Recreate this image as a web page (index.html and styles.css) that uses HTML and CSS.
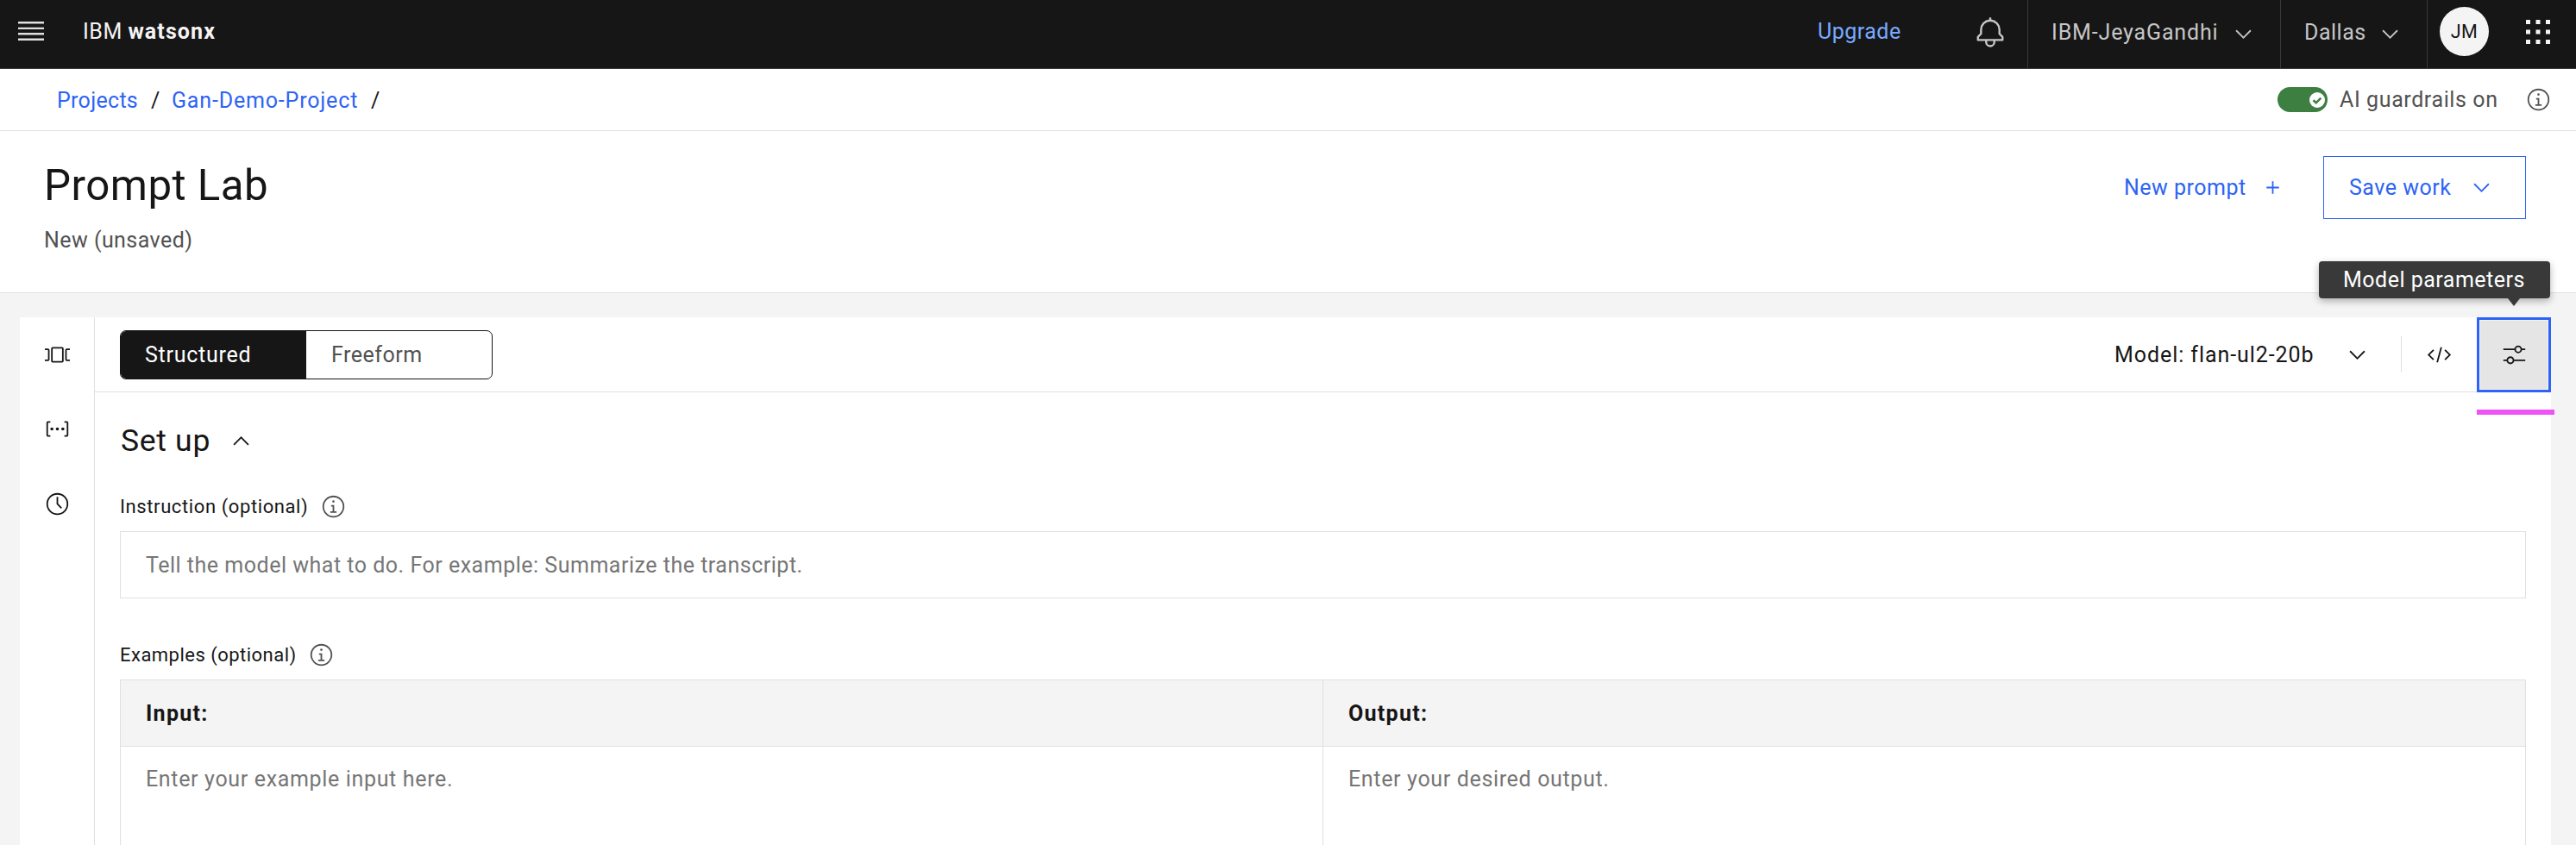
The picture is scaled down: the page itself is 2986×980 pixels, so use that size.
FILE: index.html
```html
<!DOCTYPE html>
<html lang="en">
<head>
<meta charset="utf-8">
<title>Prompt Lab</title>
<link rel="stylesheet" href="styles.css">
</head>
<body>
<svg class="sprite" aria-hidden="true">
  <symbol id="chevron" viewBox="0 0 16 16"><path d="M8 11 3 6l.7-.7L8 9.6l4.3-4.3.7.7z"/></symbol>
  <symbol id="info" viewBox="0 0 32 32"><path d="M17 22v-8h-4v2h2v6h-3v2h8v-2zM16 8a1.5 1.5 0 1 0 1.5 1.5A1.5 1.5 0 0 0 16 8Z"/><path d="M16 30A14 14 0 1 1 30 16 14 14 0 0 1 16 30ZM16 4A12 12 0 1 0 28 16 12 12 0 0 0 16 4Z"/></symbol>
</svg>

<header class="topbar">
  <svg class="menu" viewBox="0 0 30 23"><path d="M0 0h30v2.4H0zM0 6.7h30v2.4H0zM0 13.1h30v2.4H0zM0 19.6h30V22H0z"/></svg>
  <div class="brand">IBM <b>watsonx</b></div>
  <a class="upgrade">Upgrade</a>
  <svg class="bell" viewBox="0 0 32 32"><path d="M28.7071,19.293,26,16.5859V13a10.0136,10.0136,0,0,0-9-9.9492V1H15V3.0508A10.0136,10.0136,0,0,0,6,13v3.5859L3.2929,19.293A1,1,0,0,0,3,20v3a1,1,0,0,0,1,1h7v.7768a5.152,5.152,0,0,0,4.5,5.1987A5.0057,5.0057,0,0,0,21,25V24h7a1,1,0,0,0,1-1V20A1,1,0,0,0,28.7071,19.293ZM19,25a3,3,0,0,1-6,0V24h6Zm8-3H5V20.4141L7.707,17.707A1,1,0,0,0,8,17V13a8,8,0,0,1,16,0v4a1,1,0,0,0,.293.707L27,20.4141Z"/></svg>
  <div class="picker account"><span>IBM-JeyaGandhi</span><svg class="icon"><use href="#chevron"/></svg></div>
  <div class="picker region"><span>Dallas</span><svg class="icon"><use href="#chevron"/></svg></div>
  <div class="profile">
    <div class="avatar">JM</div>
    <svg class="apps" viewBox="0 0 28 28"><path d="M0 0h5v5H0zM11.500 0h5v5h-5zM23 0h5v5h-5zM0 11.500h5v5H0zM11.500 11.500h5v5h-5zM23 11.500h5v5h-5zM0 23h5v5H0zM11.500 23h5v5h-5zM23 23h5v5h-5z"/></svg>
  </div>
</header>

<nav class="crumbs">
  <a class="crumb-projects">Projects</a><span class="slash">/</span><a class="crumb-name">Gan-Demo-Project</a><span class="slash">/</span>
  <div class="guardrails">
    <div class="toggle"><div class="knob"><svg viewBox="0 0 18 18"><path d="M4.500 9.200l3.200 3.100 5.600-5.600" fill="none" stroke="#3d7f41" stroke-width="2.600"/></svg></div></div>
    <span class="guard-label">AI guardrails on</span>
    <svg class="icon"><use href="#info"/></svg>
  </div>
</nav>

<section class="page-head">
  <div class="titles">
    <h1>Prompt Lab</h1>
    <p>New (unsaved)</p>
  </div>
  <div class="actions">
    <a class="new-prompt"><span>New prompt</span><svg class="icon" viewBox="0 0 32 32"><path d="M17 15V8h-2v7H8v2h7v7h2v-7h7v-2z"/></svg></a>
    <button class="save"><span>Save work</span><svg class="icon"><use href="#chevron"/></svg></button>
  </div>
</section>

<main class="workspace">
  <aside class="rail">
    <div class="rail-item"><svg class="icon" viewBox="0 0 32 32"><path d="M22,26H10a2,2,0,0,1-2-2V8a2,2,0,0,1,2-2H22a2,2,0,0,1,2,2V24A2,2,0,0,1,22,26ZM10,8V24H22V8Z M4,24H0V22H4V10H0V8H4a2,2,0,0,1,2,2V22A2,2,0,0,1,4,24Z M32,24H28a2,2,0,0,1-2-2V10a2,2,0,0,1,2-2h4v2H28V22h4Z"/></svg></div>
    <div class="rail-item"><svg class="icon" viewBox="0 0 32 32"><path d="M7 26H4a2 2 0 0 1-2-2V8a2 2 0 0 1 2-2h3v2H4v16h3zM25 26h3a2 2 0 0 0 2-2V8a2 2 0 0 0-2-2h-3v2h3v16h-3z"/><circle cx="9" cy="16" r="2"/><circle cx="16" cy="16" r="2"/><circle cx="23" cy="16" r="2"/></svg></div>
    <div class="rail-item"><svg class="icon" viewBox="0 0 32 32"><path d="M16 30A14 14 0 1 1 30 16 14 14 0 0 1 16 30ZM16 4A12 12 0 1 0 28 16 12 12 0 0 0 16 4Z"/><path d="M20.590 22 15 16.410V7h2v8.580l5 5.010z"/></svg></div>
  </aside>

  <div class="editor">
    <div class="toolbar">
      <div class="switcher"><div class="tab active">Structured</div><div class="tab">Freeform</div></div>
      <div class="model"><span>Model: flan-ul2-20b</span><svg class="icon"><use href="#chevron"/></svg></div>
      <div class="divider"></div>
      <div class="tool"><svg class="icon" viewBox="0 0 32 32"><path d="M31 16 24 23 22.590 21.590 28.170 16 22.590 10.410 24 9zM1 16 8 9 9.410 10.410 3.830 16 9.410 21.590 8 23zM12.419 25.484 17.639 6.001 19.571 6.519 14.351 26.002z"/></svg></div>
      <div class="tool params">
        <svg class="icon" viewBox="0 0 32 32"><path d="M30,8h-4.1c-0.5-2.3-2.5-4-4.9-4s-4.4,1.700-4.9,4H2v2h14.100c0.500,2.300,2.500,4,4.900,4s4.400-1.700,4.900-4H30V8z M21,12c-1.700,0-3-1.300-3-3s1.300-3,3-3s3,1.300,3,3S22.700,12,21,12z M2,24h4.100c0.500,2.300,2.500,4,4.900,4s4.400-1.700,4.900-4H30v-2H15.900c-0.500-2.300-2.500-4-4.900-4s-4.400,1.700-4.900,4H2V24z M11,20c1.700,0,3,1.300,3,3s-1.300,3-3,3s-3-1.300-3-3S9.300,20,11,20z"/></svg>
        <div class="tooltip">Model parameters</div>
        <div class="marker"></div>
      </div>
    </div>

    <div class="content">
      <h2><span>Set up</span><svg class="icon up"><use href="#chevron"/></svg></h2>
      <div class="label instruction"><span>Instruction (optional)</span><svg class="icon"><use href="#info"/></svg></div>
      <div class="field">Tell the model what to do. For example: Summarize the transcript.</div>
      <div class="label examples"><span>Examples (optional)</span><svg class="icon"><use href="#info"/></svg></div>
      <div class="table">
        <div class="th th-in">Input:</div><div class="th th-out">Output:</div>
        <div class="td td-in">Enter your example input here.</div><div class="td td-out">Enter your desired output.</div>
      </div>
    </div>
  </div>
</main>
</body>
</html>
```
FILE: styles.css
```css
* { box-sizing: border-box; }
body {
  margin: 0;
  width: 2986px;
  height: 980px;
  overflow: hidden;
  display: flex;
  flex-direction: column;
  background: #fff;
  color: #161616;
  font: 25px/30px Roboto, "Liberation Sans", sans-serif;
  letter-spacing: 0.5px;
  white-space: nowrap;
}
h1, h2, p { margin: 0; font-weight: 400; }
.sprite { display: none; }
.icon { width: 29px; height: 29px; flex: none; fill: currentColor; }

.topbar {
  display: flex;
  align-items: center;
  height: 80px;
  flex: none;
  background: #161616;
  border-bottom: 1px solid #393939;
  color: #f4f4f4;
}
.menu { width: 30px; height: 23px; margin: 0 45px 6px 21px; fill: #e0e0e0; }
.brand { padding-bottom: 6px; }
.brand b { font-weight: 700; letter-spacing: 1.1px; }
.upgrade { margin-left: auto; width: 181px; padding-bottom: 6px; color: #78a9ff; }
.bell { width: 38px; height: 38px; margin: 0 24px 3px 0; fill: #c6c6c6; }
.picker {
  display: flex;
  align-items: center;
  justify-content: space-between;
  height: 79px;
  padding: 0 28px 4px 27px;
  border-left: 1px solid #393939;
  color: #c6c6c6;
}
.picker .icon { margin-top: 3px; }
.account { width: 293px; letter-spacing: 0.85px; }
.region { width: 170px; }
.profile {
  display: flex;
  align-items: center;
  width: 173px;
  height: 79px;
  padding: 0 0 6px 14px;
  border-left: 1px solid #393939;
}
.avatar {
  width: 57px;
  height: 57px;
  border-radius: 50%;
  background: #f4f4f4;
  color: #161616;
  font-size: 21.500px;
  line-height: 57px;
  text-align: center;
}
.apps { width: 28px; height: 28px; margin-left: 43px; fill: #f4f4f4; }

.crumbs {
  display: flex;
  align-items: center;
  height: 72px;
  flex: none;
  padding: 2px 29px 0 66px;
  border-bottom: 1px solid #e0e0e0;
}
.crumbs a, .actions a { color: #2d63f6; }
.crumbs .crumb-projects { width: 109px; letter-spacing: 0.3px; }
.slash { width: 24px; }
.crumb-name { width: 231px; letter-spacing: 0.83px; }
.guardrails { display: flex; align-items: center; margin-left: auto; color: #525252; }
.toggle {
  display: flex;
  align-items: center;
  justify-content: flex-end;
  width: 58px;
  height: 29px;
  margin: -2px 14px 0 0;
  padding-right: 3px;
  border-radius: 15px;
  background: #3d7f41;
}
.knob { width: 18px; height: 18px; border-radius: 50%; background: #fff; }
.knob svg { display: block; }
.guard-label { width: 216px; margin-top: -2px; letter-spacing: 0.6px; }
.guardrails .icon { margin-top: -2px; }

.page-head {
  display: flex;
  justify-content: space-between;
  height: 188px;
  flex: none;
  padding: 29px 58px 0 51px;
  border-bottom: 1px solid #e0e0e0;
}
h1 { margin: 4px 0 19px; font-size: 49.200px; line-height: 60px; letter-spacing: 0.5px; }
.titles p { color: #525252; letter-spacing: 0.45px; }
.actions { display: flex; height: 73px; align-items: center; }
.new-prompt { display: flex; align-items: center; justify-content: space-between; width: 187px; margin-right: 44px; }
.save {
  display: flex;
  align-items: center;
  justify-content: space-between;
  width: 235px;
  height: 73px;
  padding: 0 36px 0 29px;
  border: 1px solid #2d63f6;
  background: #fff;
  color: #2d63f6;
  font: inherit;
  letter-spacing: inherit;
}

.workspace { display: flex; flex: 1; min-height: 0; padding: 28px 29px 0 23px; background: #f4f4f4; }
.rail { width: 87px; flex: none; background: #fff; border-right: 1px solid #e0e0e0; }
.rail-item { display: flex; align-items: center; justify-content: center; height: 86.500px; }
.editor { display: flex; flex-direction: column; flex: 1; min-width: 0; background: #fff; }

.toolbar { display: flex; flex: none; height: 87px; padding-left: 29px; border-bottom: 1px solid #e0e0e0; }
.switcher {
  display: flex;
  width: 432px;
  height: 57px;
  margin-top: 15px;
  overflow: hidden;
  border: 1px solid #161616;
  border-radius: 7px;
}
.tab { width: 50%; padding-left: 29px; line-height: 55px; color: #525252; }
.tab.active { padding-left: 28px; background: #161616; color: #fff; letter-spacing: 0.75px; }
.model { display: flex; align-items: center; justify-content: space-between; width: 296px; height: 87px; margin: 0 36px 0 auto; letter-spacing: 0.93px; }
.divider { width: 1px; height: 42px; margin-top: 22px; background: #e0e0e0; }
.tool { display: flex; align-items: center; justify-content: center; width: 87px; height: 87px; }
.params { position: relative; width: 86px; background: #e5e5e5; border: 3px solid #2d63f6; box-shadow: inset 0 0 0 1px #f4f4f4; }
.tooltip {
  position: absolute;
  top: -68px;
  right: -2px;
  width: 268px;
  height: 43px;
  padding-left: 28px;
  border-radius: 4px;
  background: #393939;
  box-shadow: 0 3px 8px rgba(0, 0, 0, 0.3);
  color: #fff;
  line-height: 43px;
}
.tooltip::after {
  content: "";
  position: absolute;
  top: 43px;
  right: 35px;
  border: 7px solid transparent;
  border-top: 9px solid #393939;
  border-bottom: 0;
}
.marker { position: absolute; top: 104px; left: -3px; width: 90px; height: 6px; background: #ee53f7; }

.content { display: flex; flex-direction: column; flex: 1; min-height: 0; padding: 34px 29px 0 29px; }
h2 { display: flex; align-items: center; font-size: 35.500px; line-height: 44px; letter-spacing: 0.7px; }
h2 span { width: 126px; padding-left: 1px; }
.up { transform: scaleY(-1); }
.label { display: flex; align-items: center; font-size: 22px; letter-spacing: 0.6px; }
.label .icon { color: #525252; }
.instruction { margin: 39.500px 0 13.500px; }
.instruction span { width: 233px; }
.examples { margin: 50.500px 0 13.500px; letter-spacing: 0.48px; }
.examples span { width: 219px; }
.field { height: 78px; flex: none; padding-left: 29px; border: 1px solid #e0e0e0; color: #767676; line-height: 77px; letter-spacing: 0.51px; }
.table {
  display: grid;
  grid-template-columns: 1394px 1fr;
  grid-template-rows: 77px 1fr;
  flex: 1;
  min-height: 0;
  border: 1px solid #e0e0e0;
  border-bottom: 0;
}
.th { padding-left: 29px; background: #f4f4f4; border-bottom: 1px solid #e0e0e0; font-weight: 700; line-height: 77px; letter-spacing: 1.3px; }
.td { padding: 23px 0 0 29px; color: #767676; letter-spacing: 0.66px; }
.th-in, .td-in { border-right: 1px solid #e0e0e0; }
```
